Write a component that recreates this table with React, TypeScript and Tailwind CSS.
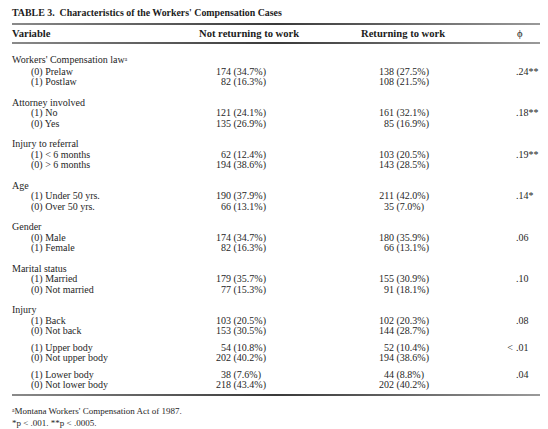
import React from "react";

type Row = { label: string; a: [string, string]; b: [string, string] };
type Group = { title?: string; note?: boolean; phi: string; phiPrefix?: string; rows: Row[] };

const groups: Group[][] = [
  [
    {
      title: "Workers' Compensation law",
      note: true,
      phi: ".24**",
      rows: [
        { label: "(0) Prelaw", a: ["174", "(34.7%)"], b: ["138", "(27.5%)"] },
        { label: "(1) Postlaw", a: ["82", "(16.3%)"], b: ["108", "(21.5%)"] },
      ],
    },
  ],
  [
    {
      title: "Attorney involved",
      phi: ".18**",
      rows: [
        { label: "(1) No", a: ["121", "(24.1%)"], b: ["161", "(32.1%)"] },
        { label: "(0) Yes", a: ["135", "(26.9%)"], b: ["85", "(16.9%)"] },
      ],
    },
  ],
  [
    {
      title: "Injury to referral",
      phi: ".19**",
      rows: [
        { label: "(1) < 6 months", a: ["62", "(12.4%)"], b: ["103", "(20.5%)"] },
        { label: "(0) > 6 months", a: ["194", "(38.6%)"], b: ["143", "(28.5%)"] },
      ],
    },
  ],
  [
    {
      title: "Age",
      phi: ".14*",
      rows: [
        { label: "(1) Under 50 yrs.", a: ["190", "(37.9%)"], b: ["211", "(42.0%)"] },
        { label: "(0) Over 50 yrs.", a: ["66", "(13.1%)"], b: ["35", "(7.0%)"] },
      ],
    },
  ],
  [
    {
      title: "Gender",
      phi: ".06",
      rows: [
        { label: "(0) Male", a: ["174", "(34.7%)"], b: ["180", "(35.9%)"] },
        { label: "(1) Female", a: ["82", "(16.3%)"], b: ["66", "(13.1%)"] },
      ],
    },
  ],
  [
    {
      title: "Marital status",
      phi: ".10",
      rows: [
        { label: "(1) Married", a: ["179", "(35.7%)"], b: ["155", "(30.9%)"] },
        { label: "(0) Not married", a: ["77", "(15.3%)"], b: ["91", "(18.1%)"] },
      ],
    },
  ],
  [
    {
      title: "Injury",
      phi: ".08",
      rows: [
        { label: "(1) Back", a: ["103", "(20.5%)"], b: ["102", "(20.3%)"] },
        { label: "(0) Not back", a: ["153", "(30.5%)"], b: ["144", "(28.7%)"] },
      ],
    },
    {
      phi: ".01",
      phiPrefix: "<",
      rows: [
        { label: "(1) Upper body", a: ["54", "(10.8%)"], b: ["52", "(10.4%)"] },
        { label: "(0) Not upper body", a: ["202", "(40.2%)"], b: ["194", "(38.6%)"] },
      ],
    },
    {
      phi: ".04",
      rows: [
        { label: "(1) Lower body", a: ["38", "(7.6%)"], b: ["44", "(8.8%)"] },
        { label: "(0) Not lower body", a: ["218", "(43.4%)"], b: ["202", "(40.2%)"] },
      ],
    },
  ],
];

const Rule = () => (
  <div className="h-[2px] w-full bg-linear-to-r from-[#8a8a8a] via-[#3a3a3a] to-[#9a9a9a]" />
);

const Value = ({ v, numW }: { v: [string, string]; numW: string }) => (
  <div className="flex">
    <span className={`${numW} text-right`}>{v[0]}</span>
    <span className="pl-[2.5px]">{v[1]}</span>
  </div>
);

export default function App() {
  return (
    <div
      className="w-[548px] h-[429px] bg-white text-[#262626] pl-[12px] pr-[8px] pt-[6px]"
      style={{ fontFamily: '"Liberation Serif", "Times New Roman", serif' }}
    >
      <div className="text-[9.9px] font-bold leading-[14px] text-[#1c1c1c]">
        TABLE 3.&nbsp;&nbsp;Characteristics of the Workers' Compensation Cases
      </div>
      <div className="mt-[3px]">
        <Rule />
      </div>
      <div className="flex h-[17px] items-center text-[10.6px] font-bold text-[#1c1c1c]">
        <div className="w-[174px]">Variable</div>
        <div className="w-[165px] pl-[13px]">Not returning to work</div>
        <div className="w-[153px] pl-[10px]">Returning to work</div>
        <div className="pl-[13px] font-normal">ϕ</div>
      </div>
      <Rule />

      <div className="pt-[11px] text-[10px] leading-[10.5px]">
        {groups.map((block, gi) => (
          <div key={gi} className="mb-[10px] last:mb-0">
            {block.map((g, si) => (
              <div key={si} className={si > 0 ? "mt-[6px]" : ""}>
                {g.title && (
                  <div>
                    {g.title}
                    {g.note && <span className="relative top-[-2px] text-[5.5px]">a</span>}
                  </div>
                )}
                {g.rows.map((r, ri) => (
                  <div key={ri} className="flex">
                    <div className="w-[174px] pl-[19px]">{r.label}</div>
                    <div className="w-[165px]">
                      <Value v={r.a} numW="w-[45px]" />
                    </div>
                    <div className="w-[153px]">
                      <Value v={r.b} numW="w-[43px]" />
                    </div>
                    <div className="flex">
                      {ri === 0 && (
                        <>
                          <span className="w-[12px] pr-[3px] text-right">{g.phiPrefix ?? ""}</span>
                          <span>{g.phi}</span>
                        </>
                      )}
                    </div>
                  </div>
                ))}
              </div>
            ))}
          </div>
        ))}
      </div>

      <div className="mt-[3px]">
        <Rule />
      </div>
      <div className="pt-[10px] text-[9px] leading-[11px]">
        <div>
          <span className="relative top-[-2px] text-[5.5px]">a</span>Montana Workers' Compensation Act of 1987.
        </div>
        <div>*p &lt; .001. **p &lt; .0005.</div>
      </div>
    </div>
  );
}
